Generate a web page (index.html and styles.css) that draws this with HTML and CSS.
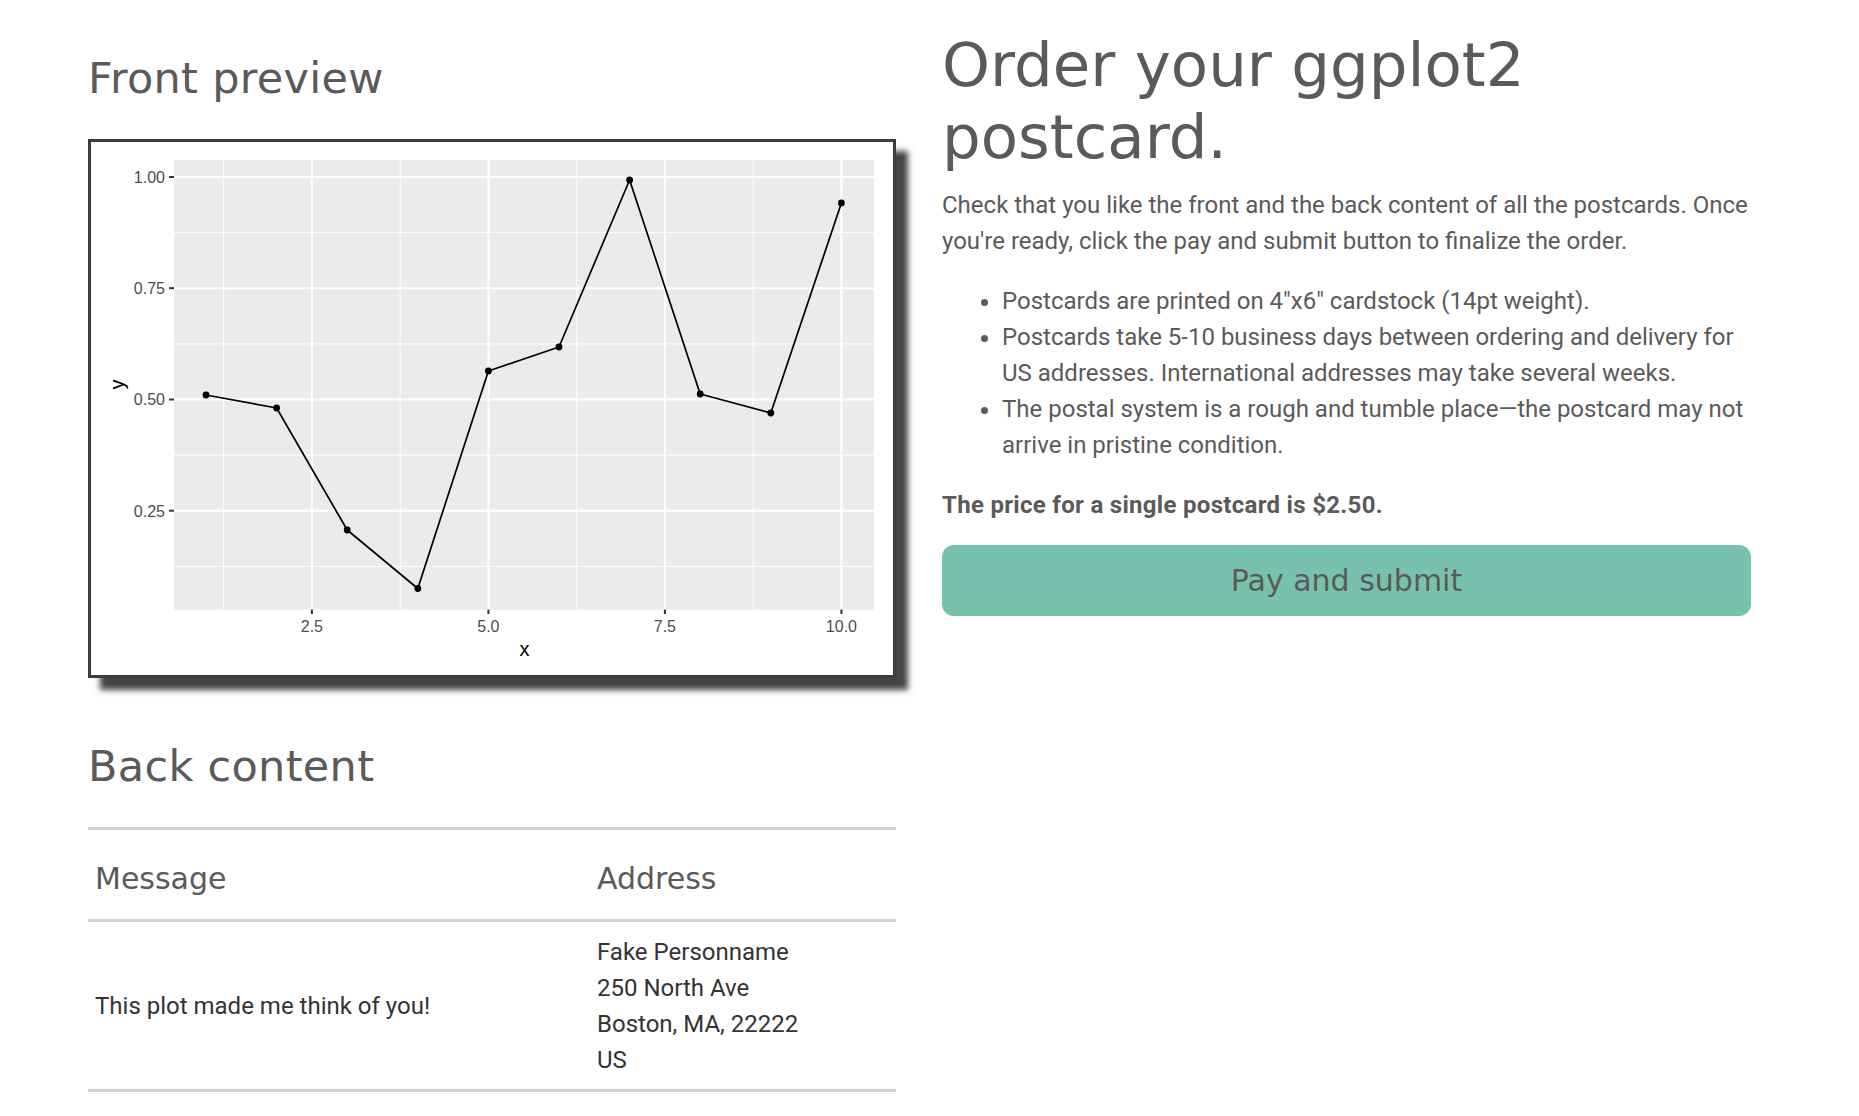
FILE: index.html
```html
<!DOCTYPE html>
<html lang="en">
<head>
<meta charset="utf-8">
<title>Order your ggplot2 postcard</title>
<link rel="stylesheet" href="styles.css">
</head>
<body>
<main class="page">
  <section class="col-left">
    <h3 class="section-title first">Front preview</h3>
    <div class="plot-card">
      <svg class="plot" width="802" height="533" viewBox="91 142 802 533" xmlns="http://www.w3.org/2000/svg">
        <rect x="91" y="142" width="802" height="533" fill="#ffffff"/>
        <rect x="174" y="160" width="700" height="449.5" fill="#ebebeb"/>
        <g stroke="#ffffff" stroke-width="1">
          <line x1="174" x2="874" y1="566.4" y2="566.4"/>
          <line x1="174" x2="874" y1="455.1" y2="455.1"/>
          <line x1="174" x2="874" y1="343.9" y2="343.9"/>
          <line x1="174" x2="874" y1="232.6" y2="232.6"/>
          <line x1="223.6" x2="223.6" y1="160" y2="609.5"/>
          <line x1="400.2" x2="400.2" y1="160" y2="609.5"/>
          <line x1="576.7" x2="576.7" y1="160" y2="609.5"/>
          <line x1="753.2" x2="753.2" y1="160" y2="609.5"/>
        </g>
        <g stroke="#ffffff" stroke-width="2">
          <line x1="174" x2="874" y1="177" y2="177"/>
          <line x1="174" x2="874" y1="288.2" y2="288.2"/>
          <line x1="174" x2="874" y1="399.5" y2="399.5"/>
          <line x1="174" x2="874" y1="510.7" y2="510.7"/>
          <line x1="311.9" x2="311.9" y1="160" y2="609.5"/>
          <line x1="488.4" x2="488.4" y1="160" y2="609.5"/>
          <line x1="664.9" x2="664.9" y1="160" y2="609.5"/>
          <line x1="841.4" x2="841.4" y1="160" y2="609.5"/>
        </g>
        <g stroke="#333333" stroke-width="2">
          <line x1="169" x2="174" y1="177" y2="177"/>
          <line x1="169" x2="174" y1="288.2" y2="288.2"/>
          <line x1="169" x2="174" y1="399.5" y2="399.5"/>
          <line x1="169" x2="174" y1="510.7" y2="510.7"/>
          <line x1="311.9" x2="311.9" y1="609.5" y2="614"/>
          <line x1="488.4" x2="488.4" y1="609.5" y2="614"/>
          <line x1="664.9" x2="664.9" y1="609.5" y2="614"/>
          <line x1="841.4" x2="841.4" y1="609.5" y2="614"/>
        </g>
        <g class="tick-label" text-anchor="end">
          <text x="165" y="182.8">1.00</text>
          <text x="165" y="294">0.75</text>
          <text x="165" y="405.3">0.50</text>
          <text x="165" y="516.5">0.25</text>
        </g>
        <g class="tick-label" text-anchor="middle">
          <text x="311.9" y="632">2.5</text>
          <text x="488.4" y="632">5.0</text>
          <text x="664.9" y="632">7.5</text>
          <text x="841.4" y="632">10.0</text>
        </g>
        <text class="axis-title" x="524.5" y="656" text-anchor="middle">x</text>
        <text class="axis-title" x="124" y="384.5" text-anchor="middle" transform="rotate(-90 124 384.5)">y</text>
        <polyline fill="none" stroke="#000000" stroke-width="1.7" stroke-linejoin="round"
          points="206,395 276.6,408 347.2,530 417.8,588.5 488.4,371 559,347 629.6,180 700.2,394 770.8,413 841.4,203"/>
        <g fill="#000000">
          <circle cx="206" cy="395" r="3.4"/>
          <circle cx="276.6" cy="408" r="3.4"/>
          <circle cx="347.2" cy="530" r="3.4"/>
          <circle cx="417.8" cy="588.5" r="3.4"/>
          <circle cx="488.4" cy="371" r="3.4"/>
          <circle cx="559" cy="347" r="3.4"/>
          <circle cx="629.6" cy="180" r="3.4"/>
          <circle cx="700.2" cy="394" r="3.4"/>
          <circle cx="770.8" cy="413" r="3.4"/>
          <circle cx="841.4" cy="203" r="3.4"/>
        </g>
      </svg>
    </div>

    <h3 class="section-title">Back content</h3>
    <table class="back-table">
      <thead>
        <tr>
          <th class="col-message">Message</th>
          <th class="col-address">Address</th>
        </tr>
      </thead>
      <tbody>
        <tr>
          <td>This plot made me think of you!</td>
          <td>Fake Personname<br>250 North Ave<br>Boston, MA, 22222<br>US</td>
        </tr>
      </tbody>
    </table>
  </section>

  <section class="col-right">
    <h1 class="title">Order your ggplot2 postcard.</h1>
    <p class="lead-text">Check that you like the front and the back content of all the postcards. Once you're ready, click the pay and submit button to finalize the order.</p>
    <ul class="info-list">
      <li>Postcards are printed on 4"x6" cardstock (14pt weight).</li>
      <li>Postcards take 5-10 business days between ordering and delivery for US addresses. International addresses may take several weeks.</li>
      <li>The postal system is a rough and tumble place—the postcard may not arrive in pristine condition.</li>
    </ul>
    <p class="price">The price for a single postcard is $2.50.</p>
    <button class="pay-btn" type="button">Pay and submit</button>
  </section>
</main>
</body>
</html>
```
FILE: styles.css
```css
html, body {
  margin: 0;
  padding: 0;
  background: #ffffff;
}

body {
  font-family: Roboto, "Liberation Sans", sans-serif;
  font-size: 24px;
  line-height: 36px;
  color: #5a5a5a;
}

.page {
  display: grid;
  grid-template-columns: 808px 809px;
  column-gap: 46px;
  padding: 29px 0 0 88px;
  align-items: start;
}

.section-title {
  font-family: "DejaVu Sans", sans-serif;
  font-weight: 400;
  font-size: 43px;
  line-height: 51px;
  letter-spacing: 0.3px;
  color: #5a5a5a;
  margin: 0 0 35px;
}

.section-title.first {
  margin-top: 24px;
}

.plot-card {
  width: 808px;
  height: 539px;
  box-sizing: border-box;
  border: 3px solid #3d3d3d;
  background: #ffffff;
  box-shadow: 12px 12px 6px #444444;
  margin-bottom: 63px;
}

.plot {
  display: block;
}

.tick-label {
  font-family: "Liberation Sans", Arial, sans-serif;
  font-size: 16px;
  fill: #4d4d4d;
}

.axis-title {
  font-family: "Liberation Sans", Arial, sans-serif;
  font-size: 20px;
  fill: #000000;
}

.back-table {
  width: 808px;
  border-collapse: collapse;
  border-top: 3px solid #d2d2d2;
}

.back-table th {
  font-family: "DejaVu Sans", sans-serif;
  font-weight: 400;
  font-size: 30px;
  line-height: 45px;
  color: #5a5a5a;
  text-align: left;
  padding: 26px 7px 18px;
  border-bottom: 3px solid #d2d2d2;
}

.back-table .col-message {
  width: 488px;
}

.back-table td {
  color: #333333;
  padding: 12px 7px 11px;
  vertical-align: middle;
  border-bottom: 3px solid #d2d2d2;
}

.title {
  font-family: "DejaVu Sans", sans-serif;
  font-weight: 400;
  font-size: 61px;
  line-height: 72px;
  color: #5a5a5a;
  margin: 0 0 14px;
}

.lead-text {
  margin: 0 0 24px;
}

.info-list {
  margin: 0 0 24px;
  padding-left: 60px;
}

.price {
  font-weight: 700;
  letter-spacing: 0.3px;
  margin: 0 0 22px;
}

.pay-btn {
  display: block;
  width: 809px;
  height: 71px;
  border: none;
  border-radius: 12px;
  background: #78c2ad;
  color: #5a5a5a;
  font-family: "DejaVu Sans", sans-serif;
  font-size: 30px;
  font-weight: 400;
  padding: 0;
  cursor: pointer;
}
```
